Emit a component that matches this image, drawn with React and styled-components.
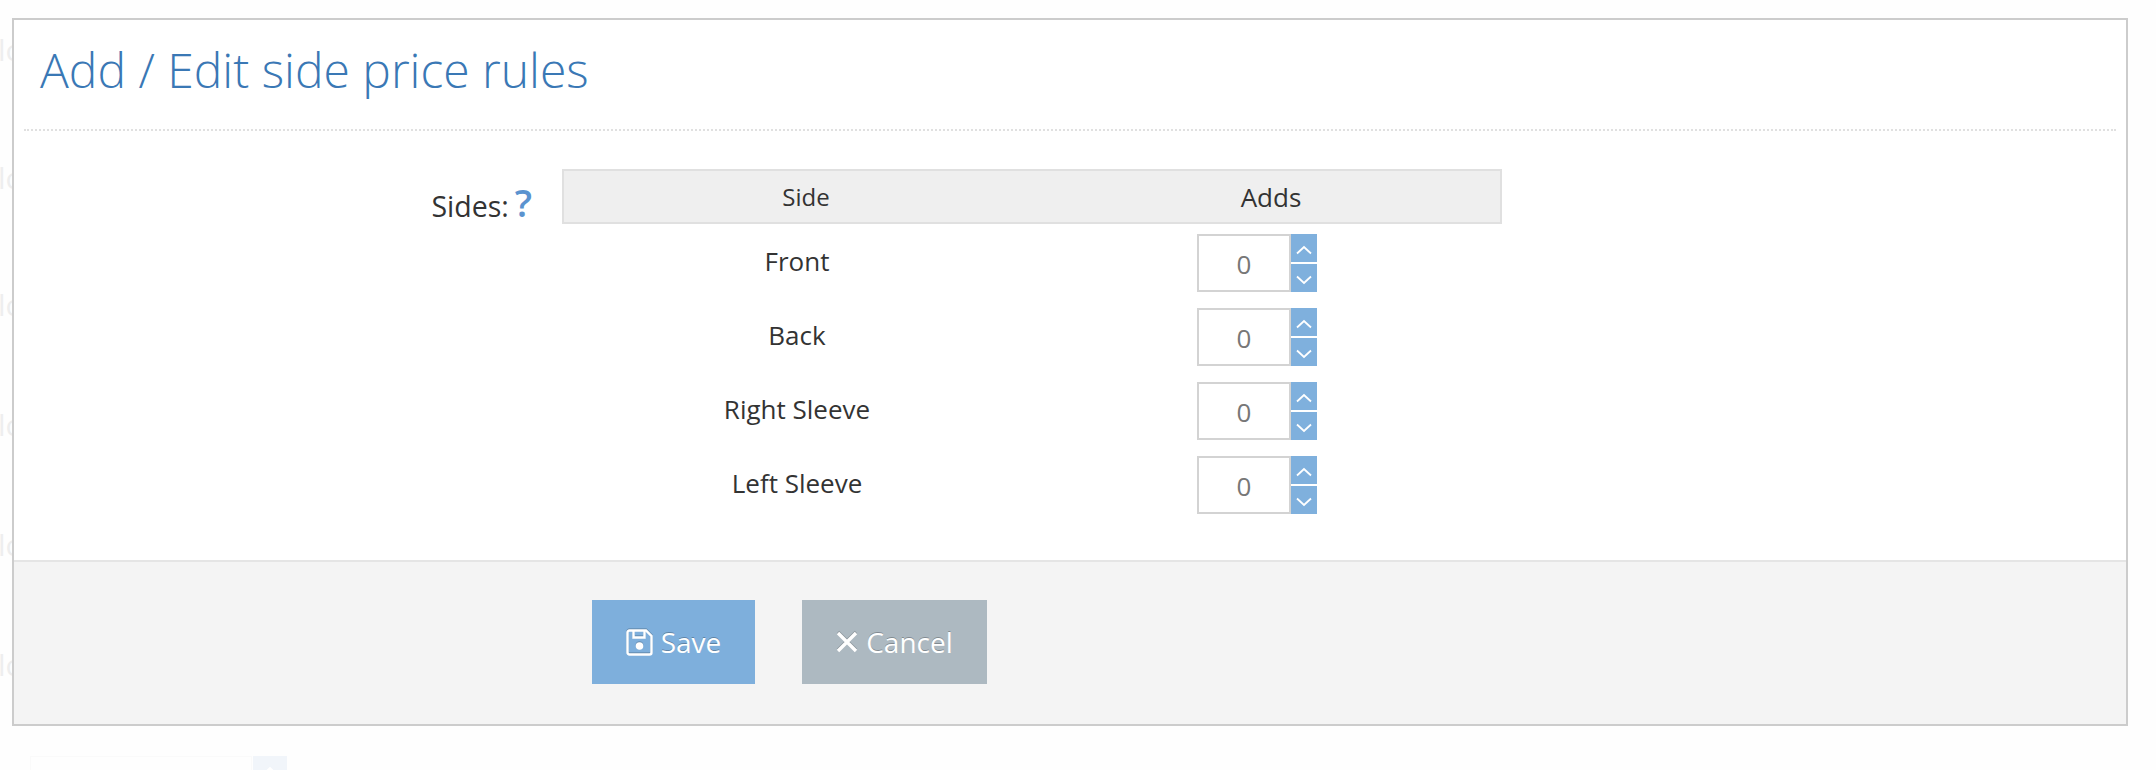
import React from "react";
import styled, { createGlobalStyle } from "styled-components";

const GlobalStyle = createGlobalStyle`
  html, body {
    margin: 0;
    padding: 0;
    background: #fefefe;
  }
  body {
    width: 2156px;
    height: 770px;
    overflow: hidden;
    font-family: "Open Sans", "Liberation Sans", sans-serif;
    color: #333;
  }
`;

const Page = styled.div`
  position: relative;
  width: 2156px;
  height: 770px;
  padding: 18px 28px 0 12px;
  box-sizing: border-box;
  overflow: hidden;
`;

const Ghost = styled.span`
  position: absolute;
  left: -2px;
  top: ${(p) => p.$top}px;
  font-size: 30px;
  line-height: 30px;
  color: #eee;
`;

const GhostField = styled.div`
  position: absolute;
  left: 30px;
  top: 756px;
  display: flex;
  width: 257px;
  height: 30px;
`;

const GhostInput = styled.div`
  flex: 1;
  box-sizing: border-box;
  border: 1px solid #fafafa;
  margin-right: 1px;
`;

const GhostStep = styled.div`
  width: 34px;
  display: flex;
  justify-content: center;
  padding-top: 10px;
  box-sizing: border-box;
  background: #f1f5fa;
`;

const Panel = styled.div`
  position: relative;
  box-sizing: border-box;
  width: 2116px;
  height: 708px;
  display: flex;
  flex-direction: column;
  background: #fff;
  border: 2px solid #ccc;
`;

const Header = styled.div`
  margin: 0 10px;
  height: 111px;
  box-sizing: border-box;
  padding: 0 0 0 16px;
  border-bottom: 2px dotted #e0e0e0;
`;

const Title = styled.h1`
  margin: 0;
  padding-top: 20px;
  font-size: 48px;
  line-height: 60px;
  font-weight: 300;
  color: #3a78b5;
`;

const Body = styled.div`
  flex: 1;
  display: flex;
  align-items: flex-start;
  padding-top: 38px;
`;

const FieldLabel = styled.div`
  width: 518px;
  margin-right: 30px;
  display: flex;
  justify-content: flex-end;
  align-items: baseline;
  gap: 6px;
  padding-top: 15px;
  font-size: 28.5px;
  line-height: 36px;
`;

const HelpMark = styled.span`
  color: #5b93cf;
  font-size: 38px;
  line-height: 36px;
  font-weight: 600;
`;

const RulesTable = styled.div`
  width: 940px;
`;

const TableHead = styled.div`
  display: grid;
  grid-template-columns: 486px 1fr;
  height: 55px;
  box-sizing: border-box;
  align-items: center;
  background: #efefef;
  border: 2px solid #e0e0e0;
`;

const HeadCell = styled.div`
  text-align: center;
  font-size: ${(p) => p.$size}px;
  padding-right: ${(p) => p.$pad || 0}px;
`;

const Rows = styled.div`
  display: flex;
  flex-direction: column;
  gap: 16px;
  padding-top: 10px;
`;

const Row = styled.div`
  display: grid;
  grid-template-columns: 470px 1fr;
  height: 58px;
`;

const RowName = styled.div`
  text-align: center;
  font-size: 26px;
  line-height: 36px;
  padding-top: 9px;
`;

const Spinner = styled.div`
  display: flex;
  margin-left: 165px;
`;

const SpinInput = styled.div`
  box-sizing: border-box;
  width: 94px;
  height: 58px;
  border: 2px solid #d3d3d3;
  background: #fff;
  color: #777;
  font-size: 26px;
  line-height: 56px;
  text-align: center;
`;

const SpinButtons = styled.div`
  display: flex;
  flex-direction: column;
  gap: 2px;
`;

const SpinButton = styled.div`
  width: 26px;
  height: 28px;
  box-sizing: border-box;
  padding-top: 3px;
  display: flex;
  align-items: center;
  justify-content: center;
  background: #7fb0dd;
`;

const Footer = styled.div`
  height: 164px;
  box-sizing: border-box;
  display: flex;
  gap: 47px;
  padding: 38px 0 0 578px;
  background: #f4f4f4;
  border-top: 2px solid #e5e5e5;
`;

const Button = styled.button`
  height: 84px;
  width: ${(p) => p.$width}px;
  display: flex;
  align-items: center;
  justify-content: center;
  gap: 8px;
  padding: 0;
  border: 0;
  color: #fff;
  background: ${(p) => p.$bg};
  font-family: inherit;
  font-size: 28px;
  text-shadow: 0 -1px 0 rgba(0, 0, 0, 0.25);
  svg {
    filter: drop-shadow(0 -1px 0 rgba(0, 0, 0, 0.2));
  }
`;

const Chevron = ({ dir }) => (
  <svg width="16" height="10" viewBox="0 0 16 10" fill="none" stroke="#fff" strokeWidth="1.8">
    <path d={dir === "up" ? "M1 8.5 8 2l7 6.5" : "M1 1.5 8 8l7-6.5"} />
  </svg>
);

const SaveIcon = () => (
  <svg width="27" height="27" viewBox="0 0 27 27" fill="none" stroke="#fff" strokeWidth="2.4">
    <path d="M3.5 1.5h16.5l5.5 5.5v16.5a2 2 0 0 1-2 2h-20a2 2 0 0 1-2-2v-20a2 2 0 0 1 2-2z" />
    <path d="M7.5 1.5v7h11v-7" />
    <circle cx="13.5" cy="17" r="2.6" fill="#fff" />
  </svg>
);

const CloseIcon = () => (
  <svg width="22" height="22" viewBox="0 0 22 22" fill="none" stroke="#fff" strokeWidth="3.4">
    <path d="M2 2l18 18M20 2L2 20" />
  </svg>
);

const sides = ["Front", "Back", "Right Sleeve", "Left Sleeve"];
const ghosts = [35, 163, 290, 410, 530, 650];

export default function App() {
  return (
    <>
      <GlobalStyle />
      <Page>
        {ghosts.map((top) => (
          <Ghost key={top} $top={top}>
            lo
          </Ghost>
        ))}
        <GhostField>
          <GhostInput />
          <GhostStep>
            <Chevron dir="up" />
          </GhostStep>
        </GhostField>
        <Panel>
          <Header>
            <Title>Add / Edit side price rules</Title>
          </Header>
          <Body>
            <FieldLabel>
              Sides: <HelpMark>?</HelpMark>
            </FieldLabel>
            <RulesTable>
              <TableHead>
                <HeadCell $size={24} $pad={2}>Side</HeadCell>
                <HeadCell $size={26} $pad={8}>Adds</HeadCell>
              </TableHead>
              <Rows>
                {sides.map((side) => (
                  <Row key={side}>
                    <RowName>{side}</RowName>
                    <Spinner>
                      <SpinInput>0</SpinInput>
                      <SpinButtons>
                        <SpinButton><Chevron dir="up" /></SpinButton>
                        <SpinButton><Chevron dir="down" /></SpinButton>
                      </SpinButtons>
                    </Spinner>
                  </Row>
                ))}
              </Rows>
            </RulesTable>
          </Body>
          <Footer>
            <Button $width={163} $bg="#7eafdc"><SaveIcon />Save</Button>
            <Button $width={185} $bg="#adb9c1"><CloseIcon />Cancel</Button>
          </Footer>
        </Panel>
      </Page>
    </>
  );
}
